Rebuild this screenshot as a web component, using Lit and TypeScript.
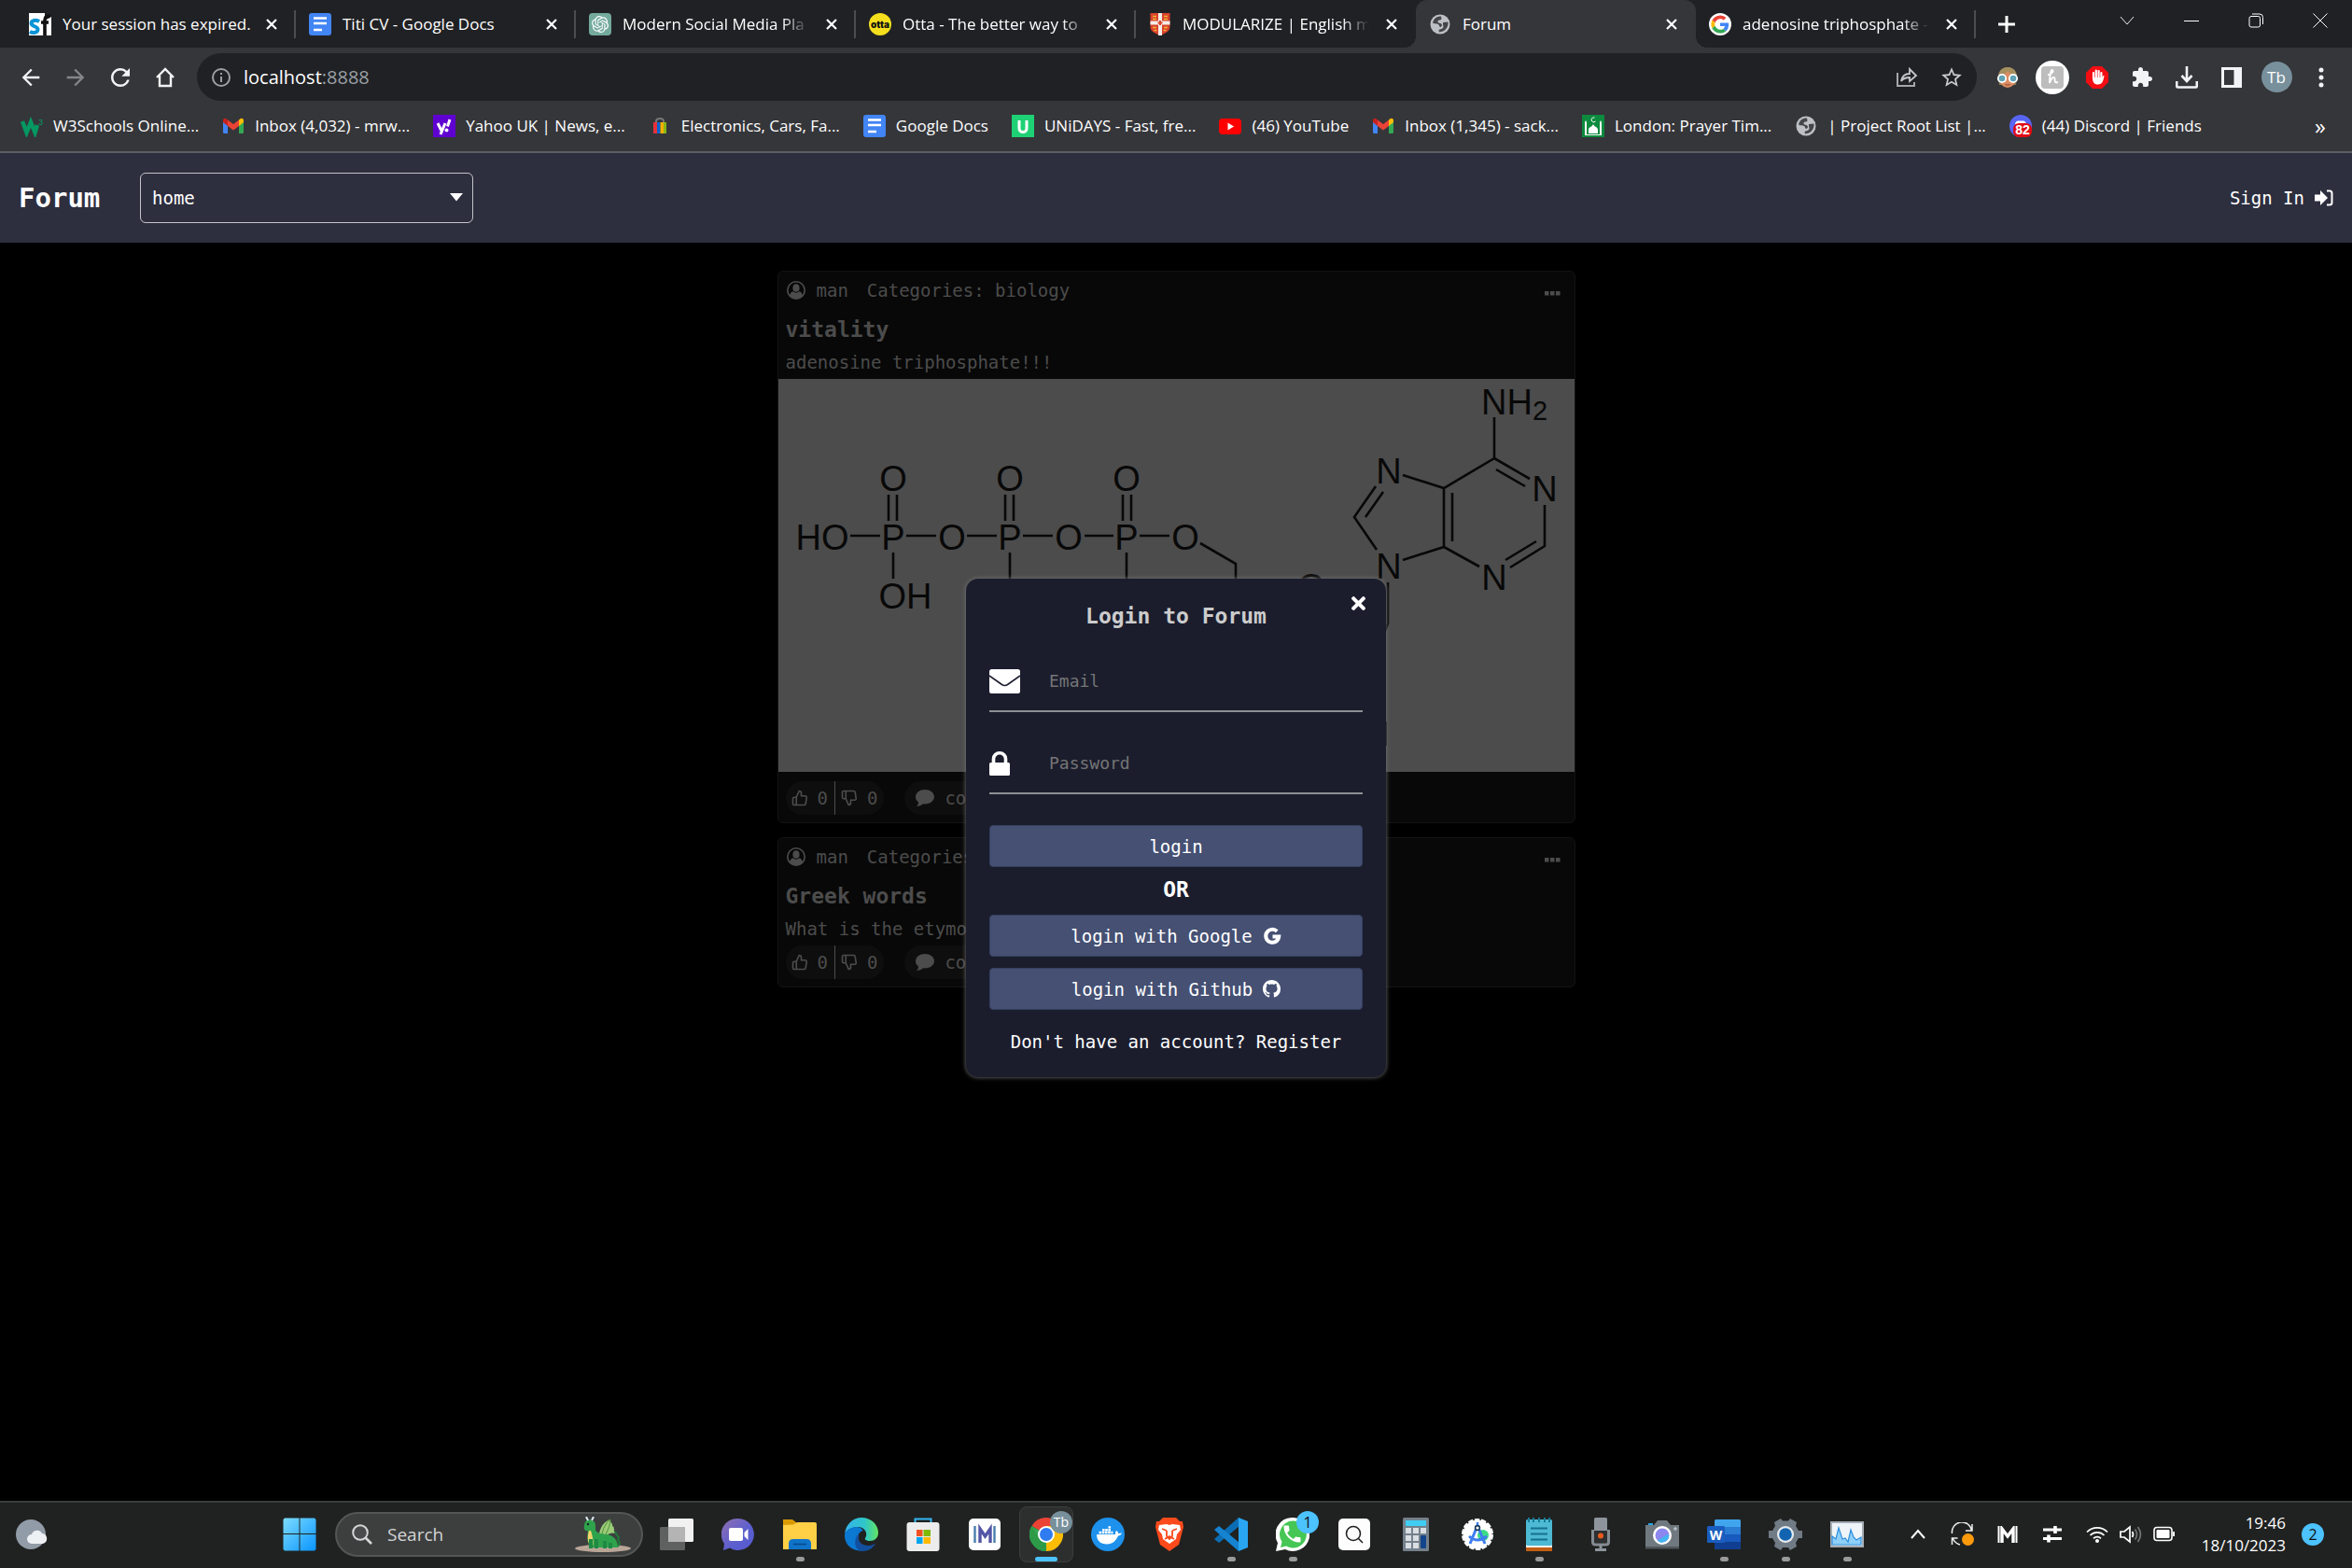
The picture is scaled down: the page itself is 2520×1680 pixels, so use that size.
import { LitElement, html, svg, css, nothing, TemplateResult } from "lit";
import { customElement, property } from "lit/decorators.js";
import { classMap } from "lit/directives/class-map.js";

type Art = TemplateResult;

const pic = (box: string, w: number, h: number, body: unknown): Art =>
  html`<svg viewBox=${box} width=${w} height=${h} aria-hidden="true" fill="none">${body}</svg>`;

/* ---------- site and bookmark icons ---------- */

const docsIcon = pic("0 0 24 24", 24, 24, svg`
  <rect width="24" height="24" rx="3" fill="#4285f4"/>
  <path d="M5 5.500h14M5 11h14M5 18h9" stroke="#fff" stroke-width="2.600"/>`);

const gmailIcon = pic("0 0 24 24", 24, 24, svg`
  <path d="M1 7v11.500A1.500 1.500 0 0 0 2.500 20H6V10z" fill="#4285f4"/>
  <path d="M23 7v11.500a1.500 1.500 0 0 1-1.500 1.500H18V10z" fill="#34a853"/>
  <path d="M18 5.500V12l5-4V6c0-2-2-3-3.600-1.800z" fill="#fbbc04"/>
  <path d="M6 5.500V12L1 8V6c0-2 2-3 3.600-1.800z" fill="#c5221f"/>
  <path d="M6 5.500l6 4.500 6-4.500V12l-6 4.500L6 12z" fill="#ea4335"/>`);

const globeIcon = pic("0 0 24 24", 24, 24, svg`
  <circle cx="12" cy="12" r="10.500" fill="#bdc1c6"/>
  <path d="M13 3.500c-5 0-8 2.500-9 7 2 1.500 4 .500 6 1.500 1.500 1 .500 2.500 2.500 3 2-1 2-3 0-4-1.500-.500-3-.500-3-2 0-2 3-1 4-2.500z" fill="#45464a"/>
  <path d="M15 10l5.500-.500c.500 4-1.500 8-5.500 10l-4 1-.500-2.500 4-1.500c1.500-1 1-3 .500-4z" fill="#45464a"/>`);

const openaiIcon = pic("0 0 24 24", 24, 24, svg`
  <rect width="24" height="24" rx="4" fill="#74aa9c"/>
  <g transform="translate(3 3) scale(.75)"><path fill="#fff" d="M22.2819 9.8211a5.9847 5.9847 0 0 0-.5157-4.9108 6.0462 6.0462 0 0 0-6.5098-2.9A6.0651 6.0651 0 0 0 4.9807 4.1818a5.9847 5.9847 0 0 0-3.9977 2.9 6.0462 6.0462 0 0 0 .7427 7.0966 5.98 5.98 0 0 0 .511 4.9107 6.051 6.051 0 0 0 6.5146 2.9001A5.9847 5.9847 0 0 0 13.2599 24a6.0557 6.0557 0 0 0 5.7718-4.2058 5.9894 5.9894 0 0 0 3.9977-2.9001 6.0557 6.0557 0 0 0-.7475-7.0729zm-9.022 12.6081a4.4755 4.4755 0 0 1-2.8764-1.0408l.1419-.0804 4.7783-2.7582a.7948.7948 0 0 0 .3927-.6813v-6.7369l2.02 1.1686a.071.071 0 0 1 .038.052v5.5826a4.504 4.504 0 0 1-4.4945 4.4944zm-9.6607-4.1254a4.4708 4.4708 0 0 1-.5346-3.0137l.142.0852 4.783 2.7582a.7712.7712 0 0 0 .7806 0l5.8428-3.3685v2.3324a.0804.0804 0 0 1-.0332.0615L9.74 19.9502a4.4992 4.4992 0 0 1-6.1408-1.6464zM2.3408 7.8956a4.485 4.485 0 0 1 2.3655-1.9728V11.6a.7664.7664 0 0 0 .3879.6765l5.8144 3.3543-2.0201 1.1685a.0757.0757 0 0 1-.071 0l-4.8303-2.7865A4.504 4.504 0 0 1 2.3408 7.872zm16.5963 3.8558L13.1038 8.364 15.1192 7.2a.0757.0757 0 0 1 .071 0l4.8303 2.7913a4.4944 4.4944 0 0 1-.6765 8.1042v-5.6772a.79.79 0 0 0-.407-.667zm2.0107-3.0231l-.142-.0852-4.7735-2.7818a.7759.7759 0 0 0-.7854 0L9.409 9.2297V6.8974a.0662.0662 0 0 1 .0284-.0615l4.8303-2.7866a4.4992 4.4992 0 0 1 6.6802 4.66zM8.3065 12.863l-2.02-1.1638a.0804.0804 0 0 1-.038-.0567V6.0742a4.4992 4.4992 0 0 1 7.3757-3.4537l-.142.0805L8.704 5.459a.7948.7948 0 0 0-.3927.6813zm1.0976-2.3654l2.602-1.4998 2.6069 1.4998v2.9994l-2.5974 1.4997-2.6067-1.4997Z"/></g>`);

const sfIcon = pic("0 0 24 24", 24, 24, svg`
  <rect width="24" height="24" fill="#fff"/>
  <path d="M17 0h7v4l-7 4z" fill="#202124"/>
  <path d="M11 9C8 7 2.500 7.500 2.500 11s7 3 7 6.500-5 4.500-8.500 2.500" stroke="#0a94d6" stroke-width="4"/>
  <path d="M23 3.500c-4-1-6 .500-6 4V24M13 10h8" stroke="#111" stroke-width="3.600"/>`);

const ottaIcon = pic("0 0 24 24", 24, 24, svg`
  <circle cx="12" cy="12" r="12" fill="#f5df1d"/>
  <text x="12" y="16" text-anchor="middle" font-family="Inter, sans-serif" font-weight="900" font-size="10" fill="#111">otta</text>`);

const crestIcon = pic("0 0 24 24", 24, 24, svg`
  <path d="M1.500 0h21v15c0 5-6 7-10.500 9C7.500 22 1.500 20 1.500 15z" fill="#d8432b"/>
  <path d="M12 0v24M1.500 10.500h21" stroke="#f3ece8" stroke-width="4"/>
  <path d="M12 8v5M9.500 10.500h5" stroke="#d8432b" stroke-width="2"/>
  <path d="M4 3.500h4M16 3.500h4M4 6.500h4M16 6.500h4M4 15.500h4M16 15.500h4M5.500 18.500h3M15.500 18.500h3" stroke="#f2b23a" stroke-width="1.500"/>`);

const googleIcon = pic("0 0 24 24", 24, 24, svg`
  <circle cx="12" cy="12" r="12" fill="#fff"/>
  <g transform="translate(2.400 2.400) scale(.4)">
  <path fill="#ea4335" d="M24 9.500c3.540 0 6.710 1.220 9.210 3.600l6.850-6.850C35.900 2.380 30.470 0 24 0 14.620 0 6.510 5.380 2.560 13.220l7.980 6.190C12.430 13.720 17.740 9.500 24 9.500z"/>
  <path fill="#4285f4" d="M46.980 24.550c0-1.570-.150-3.090-.380-4.550H24v9.020h12.940c-.580 2.960-2.260 5.480-4.780 7.180l7.730 6c4.510-4.180 7.090-10.360 7.090-17.650z"/>
  <path fill="#fbbc05" d="M10.530 28.590c-.480-1.450-.760-2.990-.760-4.590s.270-3.140.760-4.590l-7.980-6.190C.920 16.460 0 20.120 0 24c0 3.880.920 7.540 2.560 10.780l7.970-6.190z"/>
  <path fill="#34a853" d="M24 48c6.480 0 11.930-2.130 15.890-5.810l-7.730-6c-2.150 1.450-4.920 2.300-8.160 2.300-6.260 0-11.570-4.220-13.470-9.910l-7.980 6.190C6.510 42.620 14.620 48 24 48z"/></g>`);

const w3Icon = pic("0 0 24 24", 24, 24, svg`
  <path d="M2 7l4.500 12L11 8l4.500 11L18 11" stroke="#059862" stroke-width="4.500"/>
  <text x="19" y="11" font-family="Liberation Sans, sans-serif" font-size="9" fill="#059862">3</text>`);

const yahooIcon = pic("0 0 24 24", 24, 24, svg`
  <rect width="24" height="24" fill="#5f01d1"/>
  <path d="M5 9l4 8M13 9L8 21M15.500 12.500L18 5" stroke="#fff" stroke-width="3"/>
  <circle cx="14.500" cy="16.500" r="2" fill="#fff"/>`);

const ebayIcon = pic("0 0 24 24", 24, 24, svg`
  <path d="M8 9V7c0-4 8-4 8 0v2" stroke="#777" stroke-width="2"/>
  <path d="M5 8h4v12H5z" fill="#e53238"/><path d="M9 8h3.500v12H9z" fill="#0064d2"/>
  <path d="M12.500 8H16v12h-3.500z" fill="#f5af02"/><path d="M16 8h3v12h-3z" fill="#86b817"/>`);

const unidaysIcon = pic("0 0 24 24", 24, 24, svg`
  <rect width="24" height="24" fill="#1fd175"/>
  <path d="M8 6v8.500a4 4 0 0 0 8 0V6" stroke="#fff" stroke-width="3"/>`);

const youtubeIcon = pic("0 0 24 24", 24, 24, svg`
  <rect x="0" y="4" width="24" height="17" rx="4" fill="#f00"/><path d="M9.500 8.500v8l6.500-4z" fill="#fff"/>`);

const mosqueIcon = pic("0 0 24 24", 24, 24, svg`
  <rect width="24" height="24" fill="#0c8a3e"/>
  <path d="M3 21V8l1-2 1 2v13zM19 21V8l1-2 1 2v13zM7 20v-4c0-3 4-3 5-6 1 3 5 3 5 6v4z" fill="#fff"/>
  <path d="M3 21.500h18" stroke="#fff"/>
  <path d="M13.500 3a2.500 2.500 0 1 0 1 4" stroke="#fff" stroke-width="1"/>`);

const discordIcon = pic("0 0 24 24", 24, 24, svg`
  <circle cx="12" cy="12" r="12" fill="#5865f2"/>
  <path d="M6 10c1-4 3-3.500 6-3.500s5-.500 6 3.500z" fill="#fff"/>
  <rect x="4" y="9" width="20" height="15" rx="6" fill="#e00b14"/>
  <text x="14" y="21" text-anchor="middle" font-family="Liberation Sans, sans-serif" font-weight="700" font-size="14" fill="#fff">82</text>`);

/* ---------- browser controls ---------- */

const closeGlyph = pic("0 0 12 12", 12, 12, svg`<path d="M1 1l10 10M11 1L1 11" stroke="#fff" stroke-width="2.200"/>`);
const plusGlyph = pic("0 0 18 18", 18, 18, svg`<path d="M9 0v18M0 9h18" stroke="#fff" stroke-width="3"/>`);
const backGlyph = pic("0 0 24 24", 28, 28, svg`<path fill="#f1f3f4" d="M20 11H7.830l5.590-5.590L12 4l-8 8 8 8 1.410-1.410L7.830 13H20v-2z"/>`);
const forwardGlyph = pic("0 0 24 24", 28, 28, svg`<path fill="#85868a" d="M4 11h12.170l-5.590-5.590L12 4l8 8-8 8-1.410-1.410L16.170 13H4v-2z"/>`);
const reloadGlyph = pic("0 0 24 24", 30, 30, svg`<path fill="#f1f3f4" d="M17.650 6.350A7.958 7.958 0 0 0 12 4c-4.420 0-7.990 3.580-7.990 8s3.570 8 7.990 8c3.730 0 6.840-2.550 7.730-6h-2.080A5.990 5.990 0 0 1 12 18c-3.310 0-6-2.690-6-6s2.690-6 6-6c1.660 0 3.140.690 4.220 1.780L13 11h7V4l-2.350 2.350z"/>`);
const homeGlyph = pic("0 0 24 24", 24, 24, svg`<path d="M3 12l9-9 9 9M6 10v11h12V10" stroke="#f1f3f4" stroke-width="2.400"/>`);
const infoGlyph = pic("0 0 20 20", 20, 20, svg`<circle cx="10" cy="10" r="9" stroke="#9aa0a6" stroke-width="2"/><path d="M10 9v6M10 5v2" stroke="#9aa0a6" stroke-width="2"/>`);
const shareGlyph = pic("0 0 24 24", 24, 24, svg`
  <path d="M2 7v14h18v-4" stroke="#a4a6aa" stroke-width="2"/>
  <path d="M6 16c1-6 4-8 9-8V3l7 7-7 6v-4c-4 0-7 1-9 4z" stroke="#c4c6ca" stroke-width="1.800"/>`);
const starGlyph = pic("0 0 24 24", 26, 26, svg`<path fill="#c9cbce" d="M22 9.240l-7.190-.620L12 2 9.190 8.630 2 9.240l5.460 4.730L5.820 21 12 17.270 18.180 21l-1.630-7.030L22 9.240zM12 15.400l-3.760 2.270 1-4.280-3.320-2.880 4.380-.380L12 6.100l1.710 4.040 4.380.380-3.320 2.880 1 4.280L12 15.400z"/>`);
const faceGlyph = pic("0 0 24 24", 24, 24, svg`
  <path d="M2 12a10 11 0 0 1 20 0l-1 8H3z" fill="#8d7a50"/><ellipse cx="12" cy="13" rx="9" ry="10" fill="#d98c62"/>
  <path d="M2 10C3 3 8 1 12 1s9 2 10 9c-3 0-8-2-10-5-2 3-6 5-10 5z" fill="#a58f5f"/>
  <circle cx="6" cy="13" r="4.200" fill="#5fa3b5" stroke="#fff" stroke-width="1.800"/>
  <circle cx="18" cy="13" r="4.200" fill="#5fa3b5" stroke="#fff" stroke-width="1.800"/>
  <path d="M9.500 19.500q2.500 1 5 0" stroke="#9c4a35" stroke-width="1.200"/>`);
const honeyGlyph = pic("0 0 36 36", 36, 36, svg`
  <circle cx="18" cy="18" r="18" fill="#fff"/><rect x="6" y="6" width="24" height="24" rx="4" fill="#bdbdbd"/>
  <path d="M13 15c4 0 7-4 5-5s-3 8-3 14c1-5 5-8 5.500-5s-1 5 3.500 4" stroke="#fff" stroke-width="1.800"/>`);
const handGlyph = pic("0 0 24 24", 24, 24, svg`
  <path d="M7 0h10l7 7v10l-7 7H7l-7-7V7z" fill="#f40d12"/>
  <path d="M8 13V7M10.800 12V4.500M13.600 12V5M16.400 13V7" stroke="#fff" stroke-width="2.200" stroke-linecap="round"/>
  <path d="M7 12h10.500c0-2 2-2.500 2-1.500-1 5-2 9-6.500 9S7 17 7 12z" fill="#fff"/>`);
const puzzleGlyph = pic("0 0 24 24", 24, 24, svg`<path fill="#f1f3f4" d="M20.500 11H19V7c0-1.100-.900-2-2-2h-4V3.500C13 2.120 11.880 1 10.500 1S8 2.120 8 3.500V5H4c-1.100 0-1.990.900-1.990 2v3.800H3.500c1.490 0 2.700 1.210 2.700 2.700s-1.210 2.700-2.700 2.700H2V20c0 1.100.900 2 2 2h3.800v-1.500c0-1.490 1.210-2.700 2.700-2.700 1.490 0 2.700 1.210 2.700 2.700V22H17c1.100 0 2-.900 2-2v-4h1.500c1.380 0 2.500-1.120 2.500-2.500S21.880 11 20.500 11z"/>`);
const downloadGlyph = pic("0 0 24 24", 24, 24, svg`<path d="M12 0v16M6.500 10l5.500 6 5.500-6M1.200 16v5q0 1.500 1.500 1.500h18.600q1.500 0 1.500-1.500v-5" stroke="#f1f3f4" stroke-width="2.600"/>`);
const panelGlyph = pic("0 0 22 22", 22, 22, svg`<path fill="#f1f3f4" fill-rule="evenodd" d="M0 0h22v22H0zM3 3v16h10.500V3z"/>`);
const dotsGlyph = pic("0 0 6 22", 6, 22, svg`<circle cx="3" cy="3" r="2.500" fill="#f1f3f4"/><circle cx="3" cy="11" r="2.500" fill="#f1f3f4"/><circle cx="3" cy="19" r="2.500" fill="#f1f3f4"/>`);
const chevronGlyph = pic("0 0 16 16", 16, 16, svg`<path d="M1 4l7 8 7-8" stroke="#eee"/>`);
const minGlyph = pic("0 0 16 16", 16, 16, svg`<path d="M0 8.500h16" stroke="#fff"/>`);
const restoreGlyph = pic("0 0 16 16", 16, 16, svg`<rect x="1" y="3.500" width="11.500" height="11.500" rx="2" stroke="#fff"/><path d="M4 1h8q3.500 0 3.500 3.500V12" stroke="#fff"/>`);
const winCloseGlyph = pic("0 0 16 16", 16, 16, svg`<path d="M.500.500l15 15M15.500.500l-15 15" stroke="#fff"/>`);

/* ---------- forum icons ---------- */

const signInGlyph = pic("0 0 20 18", 20, 18, svg`
  <path d="M0 5.500h6V1l8 8-8 8v-4.500H0z" fill="#fff"/>
  <path d="M13 1.500h3q2.500 0 2.500 2.500v10q0 2.500-2.500 2.500h-3" stroke="#fff" stroke-width="2"/>`);
const arrowGlyph = pic("0 0 14 9", 14, 9, svg`<path d="M0 0h14L7 8.500z" fill="#fff"/>`);
const userGlyph = pic("0 0 22 22", 22, 22, svg`
  <circle cx="11" cy="11" r="10" fill="currentColor"/>
  <path d="M4.500 16A8.300 8.300 0 1 1 17.500 16C17 13.500 15.500 12.500 14.500 12.300a5 5 0 0 1-7 0C6.500 12.500 5 13.500 4.500 16z" fill="#080808"/>
  <ellipse cx="11" cy="8.500" rx="3.600" ry="4.300" fill="currentColor"/>`);
const moreGlyph = pic("0 0 17 5", 17, 5, svg`<path d="M0 0h4.500v4.500H0zM6 0h4.500v4.500H6zM12 0h4.500v4.500H12z" fill="currentColor"/>`);
const thumbPath = "M14 9V5a3 3 0 0 0-3-3l-4 9v11h11.280a2 2 0 0 0 2-1.700l1.380-9a2 2 0 0 0-2-2.300zM7 22H4a2 2 0 0 1-2-2v-7a2 2 0 0 1 2-2h3";
const upGlyph = pic("0 0 24 24", 18, 20, svg`<path d=${thumbPath} stroke="currentColor" stroke-width="2.200"/>`);
const downGlyph = pic("0 0 24 24", 18, 20, svg`<path transform="translate(0 24) scale(1 -1)" d=${thumbPath} stroke="currentColor" stroke-width="2.200"/>`);
const commentGlyph = pic("0 0 20 18", 20, 18, svg`<path d="M10 0c5.500 0 10 3.400 10 7.700s-4.500 7.700-10 7.700l-2-.200C6 17 3.500 18 1 18c1.500-1.500 2-3 2-4.500C1 12 0 10 0 7.700 0 3.400 4.500 0 10 0z" fill="currentColor"/>`);
const crossGlyph = pic("0 80 352 352", 15, 15, svg`<path fill="#fff" d="M242.720 256l100.070-100.070c12.280-12.280 12.280-32.190 0-44.480l-22.240-22.240c-12.280-12.280-32.190-12.280-44.480 0L176 189.280 75.930 89.210c-12.280-12.280-32.190-12.280-44.480 0L9.210 111.450c-12.280 12.280-12.280 32.190 0 44.480L109.280 256 9.210 356.070c-12.280 12.280-12.280 32.190 0 44.480l22.240 22.240c12.280 12.280 32.200 12.280 44.480 0L176 322.720l100.070 100.070c12.280 12.280 32.200 12.280 44.480 0l22.240-22.240c12.280-12.280 12.280-32.190 0-44.480L242.720 256z"/>`);
const envelopeGlyph = pic("0 0 33 26", 33, 26, svg`
  <rect width="33" height="26" rx="2.500" fill="#fff"/>
  <path d="M0 7l13.500 9.500q3 2 6 0L33 7" stroke="#1b1d2d" stroke-width="1.600"/>`);
const lockGlyph = pic("0 0 22 26", 22, 26, svg`
  <path d="M4.500 13V8a6.500 6.200 0 0 1 13 0V13" stroke="#fff" stroke-width="3.600"/><rect y="12" width="22" height="14" rx="1.500" fill="#fff"/>`);
const gGlyph = pic("0 0 20 20", 20, 20, svg`<path d="M15.200 4.900A7 7 0 1 0 17.200 10.500H10.500" stroke="#fff" stroke-width="4"/>`);
const githubGlyph = pic("0 0 16 16", 19, 19, svg`<path fill="#fff" d="M8 0C3.580 0 0 3.580 0 8c0 3.540 2.290 6.530 5.470 7.590.400.070.550-.170.550-.380 0-.190-.010-.820-.010-1.490-2.010.370-2.530-.490-2.690-.940-.090-.230-.480-.940-.820-1.130-.280-.150-.680-.520-.010-.530.630-.010 1.080.580 1.230.820.720 1.210 1.870.870 2.330.660.070-.520.280-.870.510-1.070-1.780-.200-3.640-.890-3.640-3.950 0-.870.310-1.590.820-2.150-.080-.200-.360-1.020.080-2.120 0 0 .670-.210 2.200.820.640-.180 1.320-.270 2-.270.680 0 1.360.090 2 .270 1.530-1.040 2.200-.820 2.200-.820.440 1.100.160 1.920.080 2.120.510.560.820 1.270.820 2.150 0 3.070-1.870 3.750-3.650 3.950.290.250.540.730.540 1.480 0 1.070-.010 1.930-.010 2.200 0 .210.150.460.550.380A8.013 8.013 0 0 0 16 8c0-4.420-3.580-8-8-8z"/>`);

/* Skeletal formula of adenosine triphosphate. */
const molecule = html`<svg class="photo" viewBox="834 406 853 421" role="img" aria-label="Adenosine triphosphate structure">
  <rect x="834" y="406" width="853" height="421" fill="#4c4c4c"/>
  <g stroke="#080808" stroke-width="2.600" fill="none">
    <path d="M911 574h32M971 574h32M1036 574h32M1096 574h32M1162 574h31M1221 574h32"/>
    <path d="M952 530v28M961 530v28M1077 530v28M1086 530v28M1203 530v28M1212 530v28"/>
    <path d="M957 592v28M1082 592v28M1207 592v28M1286 582l38 22v30"/>
    <path d="M1601 447v44l-54 32-44-14M1601 491l38 22M1603 503l31 18M1547 523v63l-44 14M1556 528v52M1547 586l38 21"/>
    <path d="M1474 521l-23 33 24 35M1482 527l-19 27M1655 541v44l-37 23M1646 580l-33 20"/>
    <path d="M1487 624v44l-3 8"/><path d="M1485 773v26" stroke-width="2"/>
  </g>
  <g font-family="Liberation Sans, Arial, sans-serif" font-size="38" fill="#080808" text-anchor="middle">
    <text x="881" y="589">HO</text>
    <text x="957" y="526">O</text><text x="1082" y="526">O</text><text x="1207" y="526">O</text>
    <text x="957" y="589">P</text><text x="1020" y="589">O</text><text x="1082" y="589">P</text>
    <text x="1145" y="589">O</text><text x="1207" y="589">P</text><text x="1270" y="589">O</text>
    <text x="970" y="652">OH</text><text x="1405" y="642">O</text>
    <text x="1488" y="518">N</text><text x="1655" y="537">N</text><text x="1488" y="620">N</text><text x="1601" y="632">N</text>
    <text x="1587" y="444" text-anchor="start">NH<tspan font-size="29" dy="6">2</tspan></text>
  </g>
</svg>`;

/* ---------- taskbar icons, all on a 36 unit square ---------- */

const app36 = (body: unknown) => pic("0 0 36 36", 36, 36, body);

const weatherArt = app36(svg`<circle cx="17" cy="18" r="16" fill="#929ca8"/><path d="M18 28a5 5 0 0 1 0-10 6 6 0 0 1 11-1 5.600 5.600 0 0 1 1 11z" fill="#eef1f4"/>`);
const windowsArt = app36(svg`
  <defs><linearGradient id="win" x1="0" y1="0" x2="1" y2="1"><stop stop-color="#7ddcff"/><stop offset="1" stop-color="#0a95ff"/></linearGradient></defs>
  <path fill="url(#win)" d="M2 .500h15.500V17H.500V2zM18.500.500H34L35.500 2v15h-17zM.500 18h17v17.500H2L.500 34zM18.500 18h17v16L34 35.500H18.500z"/>`);
const dragonArt = pic("0 0 60 38", 60, 38, svg`
  <ellipse cx="30" cy="34" rx="30" ry="4" fill="#b9a596"/>
  <path d="M26 18c2-9 6-13 12-15-1 3 3 4 2 7 3 1 1 4 3 8-5-2-9 2-12 5z" fill="#9ccc78"/>
  <path d="M38 3c-5 4-8 9-9 17M38 3c0 5-2 10-5 16" stroke="#4e8f3a"/>
  <path d="M10 10c0-5 4-8 8-6 5 1 4 7 4 10 1 4 6 4 12 5 8 1 12 7 12 14H17c-4-5-4-10-3-18-3 1-5-2-4-5z" fill="#2fa24c"/>
  <path d="M15 15c-2 6-2 13 3 18 3-3 1-12-1-18z" fill="#f1d66c"/>
  <path d="M43 16l2 4 2 2-1 3 2 3-2 4" stroke="#1e7a39" stroke-width="2"/>
  <path d="M17 24v10M23 24v10M32 26v8M38 28v6" stroke="#1f8a44" stroke-width="4"/>
  <circle cx="14" cy="8" r="1.200" fill="#122"/><path d="M14 4l-2-4M18 4l2-4" stroke="#dfe8ef" stroke-width="2"/>`);
const lensArt = pic("0 0 22 22", 22, 22, svg`<circle cx="9" cy="9" r="7.800" fill="#4a4b4c" stroke="#d4d6d8" stroke-width="2"/><path d="M14.500 14.500L21 21" stroke="#d4d6d8" stroke-width="2.600"/>`);
const taskViewArt = app36(svg`<rect x="9" y="1" width="27" height="25" rx="1.500" fill="#f1f1f1"/><rect y="10" width="27" height="25" rx="1.500" fill="#6b6b6b" fill-opacity=".85"/><path d="M9 10h18v16H9z" fill="#b4b4b4"/>`);
const chatArt = app36(svg`
  <defs><linearGradient id="chat" x1="0" y1="0" x2="1" y2="1"><stop stop-color="#8f6fb0"/><stop offset=".6" stop-color="#5b5fd0"/><stop offset="1" stop-color="#5658cc"/></linearGradient></defs>
  <path fill="url(#chat)" d="M18 1a17 17 0 1 1-9 31.500L2 35l1-7A17 17 0 0 1 18 1z"/><rect x="8" y="11" width="15" height="14" rx="2" fill="#fff"/><path d="M24.500 16l4-4v12l-4-4z" fill="#fff"/>`);
const explorerArt = app36(svg`
  <path d="M0 2h10l4 3v5H0z" fill="#d99a06"/><path d="M0 8l11-.500L15 5h19q2 0 2 2v27H0z" fill="#ffcf45"/><path d="M6 34v-6q0-5 5-5h14q5 0 5 5v6z" fill="#0f73c9"/><path d="M11 28.500h14" stroke="#084b8a" stroke-width="1.600"/>`);
const edgeArt = app36(svg`
  <defs><linearGradient id="edgeTop" x1="0" y1="0" x2="1" y2="0"><stop stop-color="#35b4ea"/><stop offset=".6" stop-color="#2fc6c9"/><stop offset="1" stop-color="#62e560"/></linearGradient></defs>
  <path d="M0 18C1 7 9 0 18 0c11 0 18 8 18 16 0 6-4 9-9 9-4 0-6-2-5-3 4-6-2-13-9-12C6 11 1 14 0 18z" fill="url(#edgeTop)"/>
  <path d="M0 18c1-4 6-8 13-8 3 0 6 2 7 4-9 1-7 19 8 19-13 7-29 0-28-15z" fill="#0b78d2"/>
  <path d="M15 17c-3 8 4 14 12 13 3-.500 5-2 6-2-3 5-8 8-14 8-9-1-10-12-4-19z" fill="#124f9e"/>`);
const storeArt = app36(svg`
  <path d="M9.500 7V1.500h17V7" stroke="#35b6f0" stroke-width="2"/><rect x=".500" y="5" width="35" height="31" rx="3" fill="#ececec"/>
  <path d="M11 13h6.500v7H11z" fill="#f25022"/><path d="M18.500 13H26v7h-7.500z" fill="#7fba00"/><path d="M11 21h6.500v7H11z" fill="#00a4ef"/><path d="M18.500 21H26v7h-7.500z" fill="#ffb900"/>`);
const bladeArt = app36(svg`<rect x="1" y="1" width="34" height="34" rx="5" fill="#fff"/>
  <path d="M7.500 9v18M28.500 9v18" stroke="#4a7fae" stroke-width="2.400"/><path d="M13 27V12l5.500 8 5.500-8v15" stroke="#5356a6" stroke-width="3.400"/>`);
const chromeArt = app36(svg`
  <path d="M18 18L2.400 9A18 18 0 0 1 33.600 9z" fill="#ea4335"/><path d="M18 18L33.600 9A18 18 0 0 1 18 36z" fill="#fbbc05"/><path d="M18 18v18A18 18 0 0 1 2.400 9z" fill="#34a853"/>
  <path d="M18 9h15.600L26 22 18 36z" fill="#fbbc05"/><path d="M2.400 9L10 22l8 6v8A18 18 0 0 1 2.400 9z" fill="#2d9a48"/>
  <circle cx="18" cy="18" r="9" fill="#fff"/><circle cx="18" cy="18" r="7" fill="#2f7bf0"/>`);
const dockerArt = app36(svg`<circle cx="18" cy="18" r="18" fill="#1d91ec"/>
  <path d="M6 18h20c0-2 0-3 1-4 2 1 2 2 2 3l4-.500c-1 2-2 3-4 3-2 5-6 9-12 9-7 0-11-4-11-10.500z" fill="#fff"/>
  <path d="M8.500 16h15M12 13.200h9M18.500 10.400h3" stroke="#fff" stroke-width="2.400" stroke-dasharray="2.600 .6"/>`);
const braveArt = app36(svg`<path d="M11 0h14l4 4 3 0 1 6-1 4-4 15-10 7-10-7L4 14l-1-4 1-6h3z" fill="#fb4a1b"/>
  <path d="M7 8l8-1 3 1 3-1 8 1 1 5-4 5-1 5-7 5-7-5-1-5-4-5z" fill="#fff"/>
  <path d="M10 12l5 2M26 12l-5 2M15 14v6l3 3 3-3v-6M13 23l5-3 5 3" stroke="#fb4a1b" stroke-width="1.800"/>`);
const vscodeArt = app36(svg`<path d="M26 0v10L5 27l-5-4z" fill="#0b6eb5"/><path d="M26 36V26L5 9l-5 4z" fill="#1583d0"/><path d="M26 0l10 4v28l-10 4z" fill="#2aa5f2"/><path d="M26 10v16l-9-8z" fill="#202221"/>`);
const whatsappArt = app36(svg`<path d="M18 0a18 18 0 1 1-8 34L0 36l2-9A18 18 0 0 1 18 0z" fill="#fff"/><path d="M18 3.500a14.500 14.500 0 1 1-7 27L5 32l1.500-6A14.500 14.500 0 0 1 18 3.500z" fill="#45c655"/>
  <g transform="translate(5.500 5.500)"><path fill="#fff" d="M6.620 10.790c1.440 2.830 3.760 5.140 6.590 6.590l2.200-2.200c.270-.270.670-.360 1.020-.240 1.120.370 2.330.570 3.570.570.550 0 1 .450 1 1V20c0 .550-.450 1-1 1-9.390 0-17-7.610-17-17 0-.550.450-1 1-1h3.500c.550 0 1 .450 1 1 0 1.250.200 2.450.570 3.570.110.350.030.740-.250 1.020l-2.200 2.200z"/></g>`);
const qArt = app36(svg`<rect x="1" y="1" width="34" height="34" rx="5" fill="#fdfdfd"/><circle cx="17" cy="17" r="7.500" stroke="#222" stroke-width="1.600"/><path d="M22 22l5 5" stroke="#222" stroke-width="1.600"/>`);
const calcArt = app36(svg`<rect x="4" y="0" width="28" height="36" rx="1.500" fill="#74808b"/><rect x="7" y="3" width="22" height="6" fill="#40cdf2"/>
  <path d="M7 14h22M7 22h14M7 30h14" stroke="#d9dee3" stroke-width="6" stroke-dasharray="6 2"/><rect x="23" y="19" width="6" height="14" rx="1" fill="#13458c"/>`);
const studioArt = app36(svg`<circle cx="18" cy="18" r="15.500" fill="#fff"/><circle cx="18" cy="18" r="16" stroke="#fff" stroke-width="2" stroke-dasharray="5.500 1.680"/>
  <circle cx="24" cy="19" r="6" fill="#3ddc84"/><path d="M17 11L10 28M19 11l7 17M9 20q9 8 19 0" stroke="#3f7df0" stroke-width="3"/><path d="M18 5v5" stroke="#3f7df0" stroke-width="2.500"/><circle cx="18" cy="11" r="2.400" fill="#fff" stroke="#1b3a5c" stroke-width="1.600"/>`);
const notepadArt = app36(svg`<path d="M4 30h28v6H4z" fill="#c25e12"/><path d="M4 28h28v4H4z" fill="#f3f3f3"/><rect x="4" y="2" width="28" height="28" rx="1.500" fill="#4db9d2"/>
  <path d="M7 0v5M12 0v5M18 0v5M24 0v5M29 0v5" stroke="#177b98" stroke-width="2"/><path d="M9 11.500h18M9 17.500h18M9 23.500h18" stroke="#15718e" stroke-width="2"/>`);
const micArt = app36(svg`<rect x="11" y="0" width="14" height="22" rx="1.500" fill="#8d949c"/><path d="M9.500 13v13q0 3 3 3h11q3 0 3-3V13" stroke="#848b92" stroke-width="3"/>
  <rect x="11" y="14" width="14" height="13" fill="#2d2f31"/><circle cx="18" cy="19.500" r="3" fill="#ea5a1c"/><path d="M18 29v5M12 34.500h12" stroke="#8d949c" stroke-width="3"/>`);
const cameraArt = app36(svg`<path d="M3 6h5v3H3z" fill="#27a5e8"/><path d="M0 8h9l4-5h10l4 5h9v25H0z" fill="#717980"/><path d="M0 31h36v2.500H0z" fill="#50565c"/>
  <circle cx="18" cy="19" r="10" fill="#fff"/><circle cx="18" cy="19" r="7.500" fill="#8b87ee"/><path d="M13 25a7.500 7.500 0 0 0 12-7c-4 1-8 4-12 7z" fill="#43b5f0"/><path d="M32 10v4M30 12h4" stroke="#cfd4d8"/>`);
const wordArt = app36(svg`<rect x="8" y="2" width="28" height="32" rx="2" fill="#2b7cd3"/><path d="M8 4q0-2 2-2h24q2 0 2 2v6H8z" fill="#41a5ee"/><path d="M8 18h28v8H8z" fill="#185abd"/><path d="M8 26h28v6q0 2-2 2H10q-2 0-2-2z" fill="#103f91"/>
  <rect y="9" width="19" height="18" rx="1.500" fill="#1a5dbe"/><text x="9.500" y="23.500" text-anchor="middle" font-family="Open Sans, sans-serif" font-weight="700" font-size="14" fill="#fff">W</text>`);
const gearArt = app36(svg`<path d="M13 1l2 2.500h6L23 1l7 4-1 4 3 5h4v8h-4l-3 5 1 4-7 4-2-3h-6l-2 3-7-4 1-4-3-5H0v-8h4l3-5-1-4z" fill="#717b85"/>
  <circle cx="18" cy="18" r="9" fill="#e6ebef"/><circle cx="18" cy="18" r="6.800" fill="#1264b0"/>`);
const monitorArt = app36(svg`<rect x="1" y="5" width="34" height="26" fill="#eef4f8" stroke="#a4acb3" stroke-width="2"/><path d="M2 29V20l4 3 3-12 4 12 3-1 3 4 3-13 3 8 3 3 5-3v8z" fill="#8fd0fa" stroke="#2c8ede" stroke-width="1.200"/>`);

const upArt = pic("0 0 16 16", 16, 16, svg`<path d="M1 12l7-8 7 8" stroke="#fff" stroke-width="2"/>`);
const syncArt = pic("0 0 26 26", 26, 26, svg`<path d="M1.500 12a10.500 10.500 0 0 1 21-3M23 2v7h-7M1.500 24v-7h6M2 17q3 6 8 7" stroke="#eee" stroke-width="1.500"/><circle cx="18.500" cy="18.500" r="6.500" fill="#ff9a0c"/>`);
const trayBladeArt = pic("0 0 22 18", 22, 18, svg`<path d="M1.500 0v18M20.500 0v18" stroke="#fff" stroke-width="2"/><path d="M5 18V3l6 8 6-8v15" stroke="#fff" stroke-width="3.400"/>`);
const slidersArt = pic("0 0 22 20", 22, 20, svg`<path d="M1 5h20M1 14.500h20" stroke="#fff" stroke-width="3"/><path d="M14 1v8M7 10.500v8" stroke="#fff" stroke-width="3.600"/>`);
const wifiArt = pic("0 0 24 20", 24, 20, svg`<path d="M1 7.500a15.500 15.500 0 0 1 22 0M4.500 11a10.500 10.500 0 0 1 15 0M8 14.300a5.700 5.700 0 0 1 8 0" stroke="#fff" stroke-width="1.700"/><circle cx="12" cy="17" r="2" fill="#fff"/>`);
const soundArt = pic("0 0 24 20", 24, 20, svg`<path d="M1 7h4l6-5v16l-6-5H1z" stroke="#fff" stroke-width="1.700"/><path d="M13.500 7q2 3 0 6" stroke="#fff" stroke-width="1.700"/><path d="M16.500 4.500q4 5.500 0 11M19.500 2q6 8 0 16" stroke="#777" stroke-width="1.600"/>`);
const batteryArt = pic("0 0 24 18", 24, 18, svg`<rect x="1" y="1.500" width="19" height="14" rx="3" stroke="#fff" stroke-width="1.600"/><rect x="3.500" y="4" width="14" height="9" rx="1" fill="#fff"/><path d="M22 6v5" stroke="#fff" stroke-width="2"/>`);

/* ---------- data ---------- */

interface Tab { title: string; icon: Art; active?: boolean; divider?: boolean; fade?: boolean }
const tabs: Tab[] = [
  { title: "Your session has expired.", icon: sfIcon, divider: true },
  { title: "Titi CV - Google Docs", icon: docsIcon, divider: true },
  { title: "Modern Social Media Pla", icon: openaiIcon, divider: true, fade: true },
  { title: "Otta - The better way to", icon: ottaIcon, divider: true, fade: true },
  { title: "MODULARIZE | English m", icon: crestIcon, fade: true },
  { title: "Forum", icon: globeIcon, active: true },
  { title: "adenosine triphosphate -", icon: googleIcon, divider: true, fade: true },
];

const bookmarks: { label: string; icon: Art }[] = [
  { label: "W3Schools Online...", icon: w3Icon },
  { label: "Inbox (4,032) - mrw...", icon: gmailIcon },
  { label: "Yahoo UK | News, e...", icon: yahooIcon },
  { label: "Electronics, Cars, Fa...", icon: ebayIcon },
  { label: "Google Docs", icon: docsIcon },
  { label: "UNiDAYS - Fast, fre...", icon: unidaysIcon },
  { label: "(46) YouTube", icon: youtubeIcon },
  { label: "Inbox (1,345) - sack...", icon: gmailIcon },
  { label: "London: Prayer Tim...", icon: mosqueIcon },
  { label: "| Project Root List |...", icon: globeIcon },
  { label: "(44) Discord | Friends", icon: discordIcon },
];

interface App { name: string; art: Art; open?: boolean; active?: boolean; badge?: string }
const apps: App[] = [
  { name: "Task view", art: taskViewArt },
  { name: "Chat", art: chatArt },
  { name: "File Explorer", art: explorerArt, open: true },
  { name: "Edge", art: edgeArt },
  { name: "Store", art: storeArt },
  { name: "Mirror", art: bladeArt },
  { name: "Chrome", art: chromeArt, active: true, badge: "Tb" },
  { name: "Docker", art: dockerArt },
  { name: "Brave", art: braveArt },
  { name: "Code", art: vscodeArt, open: true },
  { name: "WhatsApp", art: whatsappArt, open: true, badge: "1" },
  { name: "Finder", art: qArt },
  { name: "Calculator", art: calcArt },
  { name: "Android Studio", art: studioArt },
  { name: "Notepad", art: notepadArt, open: true },
  { name: "Recorder", art: micArt },
  { name: "Camera", art: cameraArt },
  { name: "Word", art: wordArt, open: true },
  { name: "Settings", art: gearArt, open: true },
  { name: "Monitor", art: monitorArt, open: true },
];

interface Post { author: string; categories: string; title: string; body: string; picture?: Art }
const posts: Post[] = [
  { author: "man", categories: "Categories: biology", title: "vitality", body: "adenosine triphosphate!!!", picture: molecule },
  { author: "man", categories: "Categories:", title: "Greek words", body: "What is the etymology" },
];

const reset = css`
  * { box-sizing: border-box; }
  svg { display: block; flex: none; }
  button { border: 0; padding: 0; margin: 0; background: none; color: inherit; font: inherit; cursor: pointer; }
  a { color: inherit; text-decoration: none; }
`;

@customElement("browser-chrome")
class BrowserChrome extends LitElement {
  static styles = [reset, css`
    :host { display: block; background: #35363a; color: #fff; font: 17px/24px "Open Sans", "Noto Sans", sans-serif; border-bottom: 2px solid #5d5e62; }
    .strip { display: flex; height: 51px; padding-left: 17px; background: #202124; }
    .tab { display: flex; align-items: center; gap: 12px; flex: 0 1 300px; min-width: 0; padding: 0 18px 0 14px; position: relative; }
    .tab.active { background: #35363a; border-radius: 12px 12px 0 0; }
    .tab.active::before, .tab.active::after { content: ""; position: absolute; bottom: 0; width: 12px; height: 12px; }
    .tab.active::before { right: 100%; background: radial-gradient(circle at 0 0, transparent 12px, #35363a 12px); }
    .tab.active::after { left: 100%; background: radial-gradient(circle at 100% 0, transparent 12px, #35363a 12px); }
    .tab.divider::after { content: ""; position: absolute; right: 0; top: 11px; width: 2px; height: 30px; background: #4a4c50; }
    .title { flex: 1; min-width: 0; white-space: nowrap; }
    .title.fade { mask-image: linear-gradient(90deg, #000 84%, transparent 98%); }
    .close { display: grid; place-items: center; width: 16px; height: 24px; }
    .new { display: grid; place-items: center; width: 66px; height: 51px; }
    .window { display: flex; margin-left: auto; }
    .window button { display: grid; place-items: center; width: 69px; height: 44px; }
    .bar { display: flex; align-items: center; height: 63px; padding: 0 9px; }
    .tool { display: grid; place-items: center; width: 48px; height: 48px; flex: none; }
    .omni { flex: 1; display: flex; align-items: center; height: 51px; margin: 0 9px 0 10px; padding: 0 3px 0 16px; border-radius: 26px; background: #202124; }
    .address { flex: 1; display: flex; padding-left: 14px; font-size: 20px; line-height: 28px; }
    .port { color: #9aa0a6; }
    .avatar { display: grid; place-items: center; width: 33px; height: 33px; border-radius: 50%; background: #78909c; font-size: 17px; }
    .marks { display: flex; align-items: center; gap: 25px; height: 48px; padding: 0 28px 7px 22px; }
    .mark { display: flex; align-items: center; gap: 11px; white-space: nowrap; }
    .more { margin-left: auto; font-size: 24px; }
  `];

  render() {
    return html`
      <div class="strip">
        ${tabs.map((t) => html`<div class=${classMap({ tab: true, active: !!t.active, divider: !!t.divider })}>
          ${t.icon}<span class=${classMap({ title: true, fade: !!t.fade })}>${t.title}</span>
          <button class="close" aria-label="Close tab">${closeGlyph}</button>
        </div>`)}
        <button class="new" aria-label="New tab">${plusGlyph}</button>
        <div class="window">
          <button aria-label="Search tabs">${chevronGlyph}</button>
          <button aria-label="Minimise">${minGlyph}</button>
          <button aria-label="Restore">${restoreGlyph}</button>
          <button aria-label="Close">${winCloseGlyph}</button>
        </div>
      </div>
      <div class="bar">
        <button class="tool" aria-label="Back">${backGlyph}</button>
        <button class="tool" aria-label="Forward">${forwardGlyph}</button>
        <button class="tool" aria-label="Reload">${reloadGlyph}</button>
        <button class="tool" aria-label="Home">${homeGlyph}</button>
        <div class="omni">
          ${infoGlyph}
          <div class="address"><span>localhost</span><span class="port">:8888</span></div>
          <button class="tool" aria-label="Share">${shareGlyph}</button>
          <button class="tool" aria-label="Bookmark">${starGlyph}</button>
        </div>
        <button class="tool" aria-label="Reader">${faceGlyph}</button>
        <button class="tool" aria-label="Coupons">${honeyGlyph}</button>
        <button class="tool" aria-label="Blocker">${handGlyph}</button>
        <button class="tool" aria-label="Extensions">${puzzleGlyph}</button>
        <button class="tool" aria-label="Downloads">${downloadGlyph}</button>
        <button class="tool" aria-label="Side panel">${panelGlyph}</button>
        <button class="tool" aria-label="Profile"><span class="avatar">Tb</span></button>
        <button class="tool" aria-label="Menu">${dotsGlyph}</button>
      </div>
      <nav class="marks">
        ${bookmarks.map((b) => html`<a class="mark" href="#">${b.icon}<span>${b.label}</span></a>`)}
        <button class="more" aria-label="More bookmarks">»</button>
      </nav>`;
  }
}

@customElement("forum-post")
class ForumPost extends LitElement {
  @property({ attribute: false }) post!: Post;

  static styles = [reset, css`
    :host { display: block; border: 1px solid #131313; border-radius: 6px; background: #080808; color: #4c4c4c; font: 19px/26px "DejaVu Sans Mono", monospace; overflow: hidden; }
    .head { display: flex; align-items: center; padding: 7px 15px 0 8px; }
    .author { margin: 0 20px 0 11px; }
    .menu { margin-left: auto; padding-top: 7px; }
    h2 { margin: 0; padding: 14px 8px 0; font-size: 23px; line-height: 30px; }
    p { margin: 0; padding: 8px 8px 0; line-height: 24px; }
    .photo { width: 100%; height: auto; margin-top: 6px; }
    .actions { display: flex; gap: 22px; padding: 6px 8px 8px; }
    .photo + .actions { padding-top: 10px; }
    .votes { display: flex; border-radius: 18px; background: #0e0e0e; }
    .votes button, .comment { display: flex; align-items: center; gap: 10px; height: 36px; padding: 0 7px 0 6px; }
    .votes button + button { border-left: 1px solid #4c4c4c; }
    .comment { gap: 11px; padding: 0 12px; border-radius: 18px; background: #0e0e0e; }
  `];

  render() {
    const p = this.post;
    return html`
      <div class="head">${userGlyph}<span class="author">${p.author}</span><span>${p.categories}</span>
        <button class="menu" aria-label="Post menu">${moreGlyph}</button></div>
      <h2>${p.title}</h2>
      <p>${p.body}</p>
      ${p.picture ?? nothing}
      <div class="actions">
        <div class="votes">
          <button aria-label="Like">${upGlyph}<span>0</span></button>
          <button aria-label="Dislike">${downGlyph}<span>0</span></button>
        </div>
        <button class="comment">${commentGlyph}<span>comment</span></button>
      </div>`;
  }
}

@customElement("login-dialog")
class LoginDialog extends LitElement {
  static styles = [reset, css`
    :host { display: block; width: 450px; position: relative; padding: 24px 25px; border-radius: 13px; background: #1b1d2d; color: #fff; box-shadow: 0 0 5px #777; font: 19px/28px "DejaVu Sans Mono", monospace; text-align: center; }
    h1 { margin: 0 0 39px; font-size: 23px; line-height: 32px; color: #ccc; }
    .dismiss { position: absolute; top: 19px; right: 22px; }
    .field { display: flex; align-items: center; height: 48px; margin-bottom: 40px; padding-bottom: 16px; border-bottom: 2px solid #8d8f96; }
    .field + .field { margin-bottom: 33px; }
    .mark { width: 64px; flex: none; }
    input { flex: 1; min-width: 0; border: 0; padding: 0; outline: 0; background: none; color: #fff; font: 18px/24px "DejaVu Sans Mono", monospace; }
    input::placeholder { color: #757575; opacity: 1; }
    .action { display: flex; align-items: center; justify-content: center; gap: 11px; width: 100%; height: 45px; margin-bottom: 12px; border: 1px solid #35405f; border-radius: 4px; background: #455073; }
    .or { margin: -2px 0 13px; font-size: 23px; font-weight: 700; line-height: 28px; }
    .register { display: block; padding-top: 8px; }
  `];

  render() {
    return html`
      <button class="dismiss" aria-label="Close">${crossGlyph}</button>
      <h1>Login to Forum</h1>
      <form @submit=${(e: Event) => e.preventDefault()}>
        <div class="field"><label class="mark" for="email" aria-label="Email">${envelopeGlyph}</label><input id="email" type="email" placeholder="Email"></div>
        <div class="field"><label class="mark" for="password" aria-label="Password">${lockGlyph}</label><input id="password" type="password" placeholder="Password"></div>
        <button class="action" type="submit">login</button>
        <p class="or">OR</p>
        <button class="action" type="button">login with Google ${gGlyph}</button>
        <button class="action" type="button">login with Github ${githubGlyph}</button>
      </form>
      <a class="register" href="#">Don't have an account? Register</a>`;
  }
}

@customElement("desktop-taskbar")
class DesktopTaskbar extends LitElement {
  static styles = [reset, css`
    :host { display: flex; box-sizing: border-box; align-items: stretch; height: 72px; padding: 0 30px 2px 16px; border-top: 2px solid #3b3c3c; background: #202221; color: #fff; font: 17px/24px "Open Sans", "Noto Sans", sans-serif; }
    .weather { display: grid; place-items: center; width: 36px; margin-right: 236px; }
    .app { position: relative; display: grid; place-items: center; width: 66px; flex: 0 1 66px; min-width: 0; }
    .app.active::before { content: ""; position: absolute; inset: 4px 4px 4px; border: 1px solid #3c3e3e; border-radius: 8px; background: #2d2f2f; }
    .app svg { position: relative; }
    .app.open::after, .app.active::after { content: ""; position: absolute; left: 50%; bottom: 5px; width: 9px; height: 5px; margin-left: -4px; border-radius: 3px; background: #9a9a9a; }
    .app.active::after { width: 24px; margin-left: -12px; background: #4cc2ff; }
    .badge { position: absolute; top: 9px; right: 5px; width: 24px; height: 24px; border-radius: 50%; background: #4cc2ff; color: #111; font-size: 16px; text-align: center; }
    .active .badge { background: #78909c; color: #fff; font-size: 14px; }
    .search { display: flex; align-items: center; gap: 16px; width: 330px; height: 48px; margin: 10px 3px 0 5px; padding: 0 11px 0 16px; border: 2px solid #545656; border-radius: 24px; background: #3d3f3f; }
    input { flex: 1; min-width: 0; border: 0; padding: 0; outline: 0; background: none; color: #fff; font: 19px/26px "Open Sans", sans-serif; }
    input::placeholder { color: #d3d4d4; opacity: 1; }
    .tray { display: flex; align-items: center; margin-left: auto; }
    .cell { display: grid; place-items: center; width: 48px; }
    .status { display: flex; align-items: center; gap: 12px; padding: 0 18px 0 12px; }
    .clock { width: 100px; text-align: right; }
    .count { width: 24px; height: 24px; margin-left: 17px; border-radius: 50%; background: #4cc2ff; color: #111; font-size: 16px; text-align: center; }
  `];

  render() {
    return html`
      <button class="weather" aria-label="Weather">${weatherArt}</button>
      <button class="app" aria-label="Start">${windowsArt}</button>
      <label class="search">${lensArt}<input type="text" placeholder="Search" aria-label="Search">${dragonArt}</label>
      ${apps.map((a) => html`<button class=${classMap({ app: true, open: !!a.open, active: !!a.active })} aria-label=${a.name}>
        ${a.art}${a.badge ? html`<span class="badge">${a.badge}</span>` : nothing}
      </button>`)}
      <div class="tray">
        <button class="cell" aria-label="Hidden icons">${upArt}</button>
        <button class="cell" aria-label="Updates">${syncArt}</button>
        <button class="cell" aria-label="Mirror">${trayBladeArt}</button>
        <button class="cell" aria-label="Mixer">${slidersArt}</button>
        <button class="status" aria-label="Network, sound and battery">${wifiArt}${soundArt}${batteryArt}</button>
        <div class="clock"><div>19:46</div><div>18/10/2023</div></div>
        <span class="count">2</span>
      </div>`;
  }
}

@customElement("app-root")
class AppRoot extends LitElement {
  static styles = [reset, css`
    :host { display: flex; flex-direction: column; min-height: 100vh; background: #000; color: #fff; font: 19px/26px "DejaVu Sans Mono", monospace; }
    header { display: flex; align-items: center; height: 96px; padding: 0 20px; background: #2d2e3e; }
    .brand { width: 130px; font-size: 29px; font-weight: 700; }
    .picker { position: relative; width: 357px; }
    select { display: block; width: 100%; height: 54px; padding: 0 12px; appearance: none; border: 1px solid #c4c4c8; border-radius: 6px; background: transparent; color: #fff; font: inherit; }
    .picker svg { position: absolute; right: 11px; top: 22px; pointer-events: none; }
    .sign { display: flex; align-items: center; gap: 11px; margin-left: auto; }
    main { position: relative; flex: 1; padding: 30px 20px; }
    .feed { display: grid; gap: 15px; max-width: 855px; margin: 0 auto; }
    .layer { position: absolute; inset: 0; display: flex; justify-content: center; align-items: flex-start; padding-top: 360px; }
  `];

  render() {
    return html`
      <browser-chrome></browser-chrome>
      <header>
        <a class="brand" href="#">Forum</a>
        <div class="picker"><select aria-label="Category"><option>home</option></select>${arrowGlyph}</div>
        <a class="sign" href="#"><span>Sign In</span>${signInGlyph}</a>
      </header>
      <main>
        <div class="feed">${posts.map((p) => html`<forum-post .post=${p}></forum-post>`)}</div>
        <div class="layer"><login-dialog role="dialog" aria-label="Login"></login-dialog></div>
      </main>
      <desktop-taskbar></desktop-taskbar>`;
  }
}
